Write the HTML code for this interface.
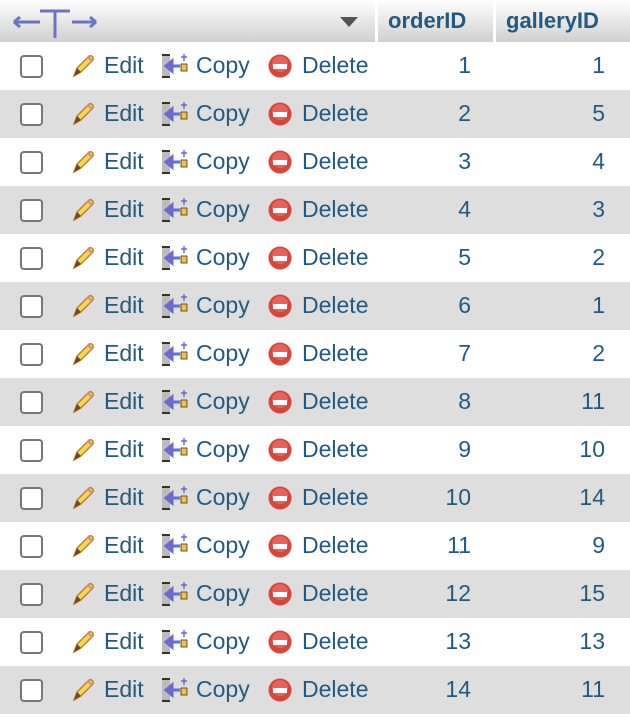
<!DOCTYPE html><html><head><style>
body{margin:0;width:630px;height:718px;background:#fff;font-family:"Liberation Sans",sans-serif;position:relative;overflow:hidden}
.h{position:absolute;top:0;height:42px;background:linear-gradient(#fff,#d0d0d0)}
.ht{position:absolute;top:8px;font-weight:bold;font-size:22px;color:#235a81}
.r{position:absolute;left:0;width:630px;height:48px;line-height:47px;font-size:23px;color:#235a81}
.g{background:#dedede}
.r span{position:absolute}
.cb{position:absolute;left:20px;top:13px;width:19px;height:19px;border:2px solid #777;border-radius:4px;background:#fff}
.n1{right:159px}.n2{right:25px}
svg{position:absolute}
</style></head><body>
<div class="h" style="left:0;width:375px"></div>
<div class="h" style="left:378px;width:115px"></div>
<div class="h" style="left:496px;width:134px"></div>
<svg style="left:12px;top:7px" width="88" height="32" viewBox="0 0 88 32"><g stroke="#6c74c0" stroke-width="3" fill="none"><path d="M2 15H28M2 15l6-5M2 15l6 5"/><path d="M28 4H58M43 4V31"/><path d="M60 15H84M84 15l-6-5M84 15l-6 5"/></g></svg>
<svg style="left:339px;top:16px" width="20" height="12"><path d="M1 1H19L10 11Z" fill="#555"/></svg>
<div class="ht" style="left:388px">orderID</div>
<div class="ht" style="left:506px">galleryID</div>
<svg width="0" height="0"><defs>
<g id="p"><path d="M5 23l3-8 12-12a3 3 0 014 4L12 19z" fill="#f3d35c" stroke="#b97a2a" stroke-width="1.3"/><path d="M5 23l3-8 4 4z" fill="#6b4a20"/><path d="M19 4l4 4" stroke="#d88" stroke-width="2"/></g>
<g id="c"><rect x="1" y="3" width="8" height="22" fill="#bbb"/><path d="M1 3h8M1 25h8" stroke="#333" stroke-width="2"/><path d="M5 14h14M5 14l6-5v10z" stroke="#6a6ad0" stroke-width="3" fill="#6a6ad0"/><rect x="20" y="12" width="6" height="7" fill="#f5c330" stroke="#333" stroke-width=".8"/><path d="M23 2v7M20 5h6" stroke="#6a6ad0" stroke-width="1.5"/></g>
<g id="d"><circle cx="12" cy="12" r="11.5" fill="#d9433a"/><circle cx="12" cy="10" r="8" fill="#ef7a70" opacity=".6"/><rect x="5" y="10" width="14" height="5" fill="#fff"/></g>
</defs></svg>
<div id="rows"></div>
<script>
var a=[[1,1],[2,5],[3,4],[4,3],[5,2],[6,1],[7,2],[8,11],[9,10],[10,14],[11,9],[12,15],[13,13],[14,11]],h='';
a.forEach(function(v,i){h+='<div class="r'+(i%2?' g':'')+'" style="top:'+(42+48*i)+'px"><div class="cb"></div><svg style="left:69px;top:11px" width="26" height="26"><use href="#p"/></svg><span style="left:104px">Edit</span><svg style="left:161px;top:10px" width="28" height="28"><use href="#c"/></svg><span style="left:196px">Copy</span><svg style="left:268px;top:12px" width="24" height="24"><use href="#d"/></svg><span style="left:302px">Delete</span><span class="n1">'+v[0]+'</span><span class="n2">'+v[1]+'</span></div>'});
document.getElementById('rows').innerHTML=h;
</script>
</body></html>
